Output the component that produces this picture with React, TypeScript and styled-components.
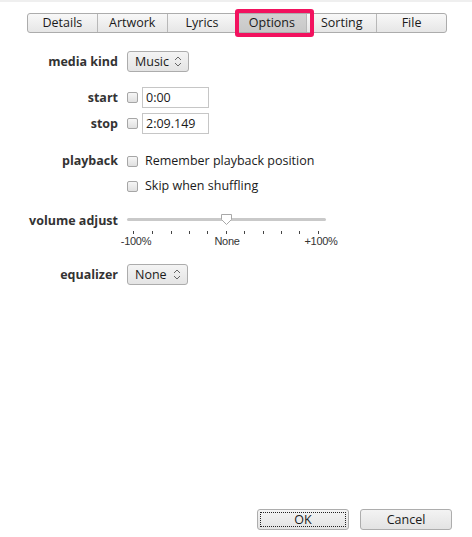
import * as React from "react";
import styled, { createGlobalStyle } from "styled-components";

const Global = createGlobalStyle`
	html, body {
		margin: 0;
		padding: 0;
		background: #fff;
	}
	body {
		font-family: "Open Sans", "Noto Sans", sans-serif;
		font-size: 12px;
		color: #1a1a1a;
	}
`;

const Window = styled.div`
	width: 472px;
	height: 537px;
	box-sizing: border-box;
	border-top: 2px solid #efefef;
	display: flex;
	flex-direction: column;
	position: relative;
`;

const TabBar = styled.div`
	position: relative;
	margin: 11px 0 0 27px;
	width: 420px;
	height: 20px;
	display: flex;
	box-sizing: border-box;
	border: 1px solid #acacac;
	border-radius: 3px;
	background: linear-gradient(#f8f8f8, #e6e6e6);
`;

const Tab = styled.div<{ $selected?: boolean }>`
	flex: 1;
	display: flex;
	align-items: center;
	justify-content: center;
	line-height: 18px;
	font-size: 12.5px;
	color: #1a1a1a;
	border-left: 1px solid #b8b8b8;
	background: ${p => (p.$selected ? "linear-gradient(#d2d2d2, #c8c8c8)" : "transparent")};
	&:first-child {
		border-left: none;
	}
`;

const Highlight = styled.div`
	position: absolute;
	left: 207px;
	top: -5px;
	width: 79px;
	height: 28px;
	box-sizing: border-box;
	border: 4px solid #f2125f;
	border-radius: 3px;
	pointer-events: none;
`;

const Form = styled.div`
	display: flex;
	flex-direction: column;
`;

const Row = styled.div<{ $top: number; $align?: string }>`
	display: grid;
	grid-template-columns: 118px 1fr;
	column-gap: 9px;
	align-items: ${p => p.$align || "center"};
	margin-top: ${p => p.$top}px;
`;

const Label = styled.div`
	text-align: right;
	font-weight: 700;
	font-size: 12.5px;
	color: #333;
	line-height: 18px;
	white-space: nowrap;
`;

const Controls = styled.div`
	display: flex;
	align-items: center;
`;

const Select = styled.div<{ $width: number }>`
	width: ${p => p.$width}px;
	height: 21px;
	box-sizing: border-box;
	border: 1px solid #acacac;
	border-radius: 3px;
	background: linear-gradient(#f4f4f4, #e4e4e4);
	display: flex;
	align-items: center;
	justify-content: space-between;
	padding: 0 6px 0 7px;
	font-size: 12.5px;
	color: #1a1a1a;
`;

const Check = styled.span`
	width: 11px;
	height: 11px;
	box-sizing: border-box;
	border: 1px solid #a6a6a6;
	border-radius: 2px;
	background: linear-gradient(#f6f6f6, #e0e0e0);
	flex: none;
`;

const TextInput = styled.div`
	margin-left: 4px;
	width: 67px;
	height: 21px;
	box-sizing: border-box;
	border: 1px solid #c6c6c6;
	padding: 0 3px;
	line-height: 19px;
	font-size: 12.5px;
	color: #1a1a1a;
`;

const CheckText = styled.span`
	margin-left: 7px;
	font-size: 12.5px;
	line-height: 18px;
	color: #1a1a1a;
`;

const Slider = styled.div`
	position: relative;
	width: 199px;
	height: 36px;
`;

const Track = styled.div`
	position: absolute;
	left: 0;
	right: 0;
	top: 6px;
	height: 3px;
	border-radius: 2px;
	background: #c9c9c9;
`;

const Thumb = styled.svg`
	position: absolute;
	left: 93px;
	top: 2px;
`;

const Tick = styled.span`
	position: absolute;
	top: 19px;
	width: 1px;
	height: 3px;
	background: #444;
`;

const TickLabel = styled.span`
	position: absolute;
	top: 23px;
	line-height: 12px;
	transform: translateX(-50%);
	font-family: "Liberation Sans", Arial, sans-serif;
	font-size: 11px;
	letter-spacing: -0.3px;
	color: #333;
	white-space: nowrap;
`;

const Footer = styled.div`
	margin-top: auto;
	display: flex;
	justify-content: flex-end;
	gap: 11px;
	padding: 0 20px 7px 0;
`;

const Button = styled.div<{ $focused?: boolean }>`
	width: 92px;
	height: 21px;
	box-sizing: border-box;
	border: 1px solid #adadad;
	border-radius: 3px;
	background: linear-gradient(#f3f3f3, #e3e3e3);
	display: flex;
	align-items: center;
	justify-content: center;
	position: relative;
	font-size: 12.5px;
	color: #1a1a1a;
	&::after {
		content: "";
		display: ${p => (p.$focused ? "block" : "none")};
		position: absolute;
		inset: 2px;
		border: 1px dotted #222;
	}
`;

const Stepper = () => (
	<svg width="8" height="11" viewBox="0 0 8 11">
		<path d="M1 4 L4 1 L7 4 M1 7 L4 10 L7 7" fill="none" stroke="#666" strokeWidth="1" />
	</svg>
);

const ticks = [6, 25, 44, 62, 80, 99, 117, 136, 154, 172, 191];

export default function App() {
	return (
		<>
			<Global />
			<Window>
				<TabBar>
					{["Details", "Artwork", "Lyrics", "Options", "Sorting", "File"].map(t => (
						<Tab key={t} $selected={t === "Options"}>
							{t}
						</Tab>
					))}
					<Highlight />
				</TabBar>
				<Form>
					<Row $top={18}>
						<Label>media kind</Label>
						<Controls>
							<Select $width={62}>
								Music <Stepper />
							</Select>
						</Controls>
					</Row>
					<Row $top={15}>
						<Label>start</Label>
						<Controls>
							<Check />
							<TextInput>0:00</TextInput>
						</Controls>
					</Row>
					<Row $top={5}>
						<Label>stop</Label>
						<Controls>
							<Check />
							<TextInput>2:09.149</TextInput>
						</Controls>
					</Row>
					<Row $top={18}>
						<Label>playback</Label>
						<Controls>
							<Check />
							<CheckText>Remember playback position</CheckText>
						</Controls>
					</Row>
					<Row $top={7}>
						<div />
						<Controls>
							<Check />
							<CheckText>Skip when shuffling</CheckText>
						</Controls>
					</Row>
					<Row $top={17} $align="start">
						<Label>volume adjust</Label>
						<Slider>
							<Track />
							{ticks.map(x => (
								<Tick key={x} style={{ left: x }} />
							))}
							<TickLabel style={{ left: 9 }}>-100%</TickLabel>
							<TickLabel style={{ left: 100 }}>None</TickLabel>
							<TickLabel style={{ left: 194 }}>+100%</TickLabel>
							<Thumb width="13" height="11" viewBox="0 0 13 11">
								<path
									d="M1.5 0.5 H11.5 V5.5 L6.5 10.5 L1.5 5.5 Z"
									fill="#fff"
									stroke="#a8a8a8"
									strokeWidth="1"
									strokeLinejoin="round"
								/>
							</Thumb>
						</Slider>
					</Row>
					<Row $top={16}>
						<Label>equalizer</Label>
						<Controls>
							<Select $width={61}>
								None <Stepper />
							</Select>
						</Controls>
					</Row>
				</Form>
				<Footer>
					<Button $focused>OK</Button>
					<Button>Cancel</Button>
				</Footer>
			</Window>
		</>
	);
}
